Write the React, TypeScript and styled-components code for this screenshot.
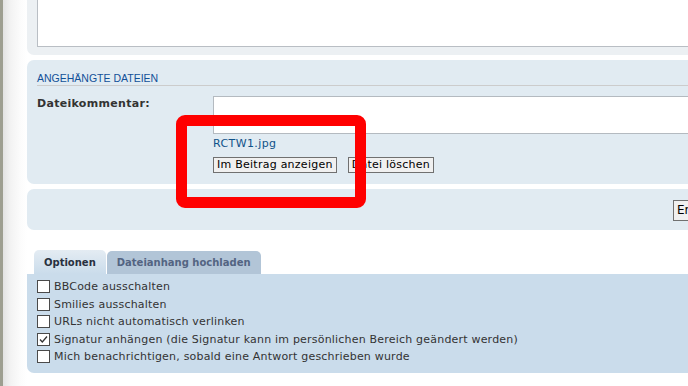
import styled, { createGlobalStyle } from 'styled-components'

const options = [
  { id: 'bbcode', label: 'BBCode ausschalten', checked: false },
  { id: 'smilies', label: 'Smilies ausschalten', checked: false },
  { id: 'urls', label: 'URLs nicht automatisch verlinken', checked: false },
  { id: 'sig', label: 'Signatur anhängen (die Signatur kann im persönlichen Bereich geändert werden)', checked: true },
  { id: 'notify', label: 'Mich benachrichtigen, sobald eine Antwort geschrieben wurde', checked: false },
]

export default function App() {
  return (
    <>
      <GlobalStyle />
      <Page>
        <EdgeStrip />
        <Main>
          <EditorPanel>
            <MessageBox />
          </EditorPanel>

          <Panel>
            <Heading>Angehängte Dateien</Heading>
            <FieldRow>
              <Label>Dateikommentar:</Label>
              <Field>
                <CommentBox />
                <FileLink href="#">RCTW1.jpg</FileLink>
                <ButtonRow>
                  <SmallButton type="button">Im Beitrag anzeigen</SmallButton>
                  <SmallButton type="button">Datei löschen</SmallButton>
                </ButtonRow>
              </Field>
            </FieldRow>
          </Panel>

          <SubmitPanel>
            <BigButton type="button">Erstellen</BigButton>
          </SubmitPanel>

          <TabBar>
            <Tab $active>Optionen</Tab>
            <Tab>Dateianhang hochladen</Tab>
          </TabBar>
          <OptionsPanel>
            {options.map((opt) => (
              <OptionRow key={opt.id}>
                <Box>
                  {opt.checked && (
                    <svg width="11" height="11" viewBox="0 0 11 11">
                      <path d="M2 5.5 L4.3 8 L9 2.5" fill="none" stroke="#333" strokeWidth="1.3" />
                    </svg>
                  )}
                </Box>
                <OptionText>{opt.label}</OptionText>
              </OptionRow>
            ))}
          </OptionsPanel>
        </Main>
        <Highlight />
      </Page>
    </>
  )
}

const GlobalStyle = createGlobalStyle`
  html, body {
    margin: 0;
    padding: 0;
    background: #fff;
  }
  body {
    font-family: "DejaVu Sans", Verdana, sans-serif;
    color: #333;
  }
`

const Page = styled.div`
  position: relative;
  display: flex;
  width: 688px;
  height: 386px;
  overflow: hidden;
  background: #fff;
`

const EdgeStrip = styled.div`
  flex: 0 0 3px;
  background: #9d9e90;
`

const Main = styled.div`
  flex: 0 0 740px;
  padding-left: 24px;
  background: linear-gradient(to right, #e2e2e2 0, #f3f3f3 8px, #fcfcfc 18px, #fff 24px);
`

const EditorPanel = styled.div`
  height: 55px;
  padding: 0 10px;
  box-sizing: border-box;
  background: #ecf0f3;
  border-radius: 0 0 7px 7px;
`

const MessageBox = styled.div`
  height: 47px;
  box-sizing: border-box;
  background: #fff;
  border: 1px solid #b9bec4;
  border-top: none;
`

const Panel = styled.div`
  margin-top: 5px;
  padding: 11px 10px 11px;
  background: #e1ebf2;
  border-radius: 7px 0 0 7px;
`

const Heading = styled.h3`
  margin: 0;
  height: 14px;
  line-height: 14px;
  font-family: "Liberation Sans", Arial, sans-serif;
  font-size: 10.5px;
  font-weight: normal;
  text-transform: uppercase;
  color: #115098;
  border-bottom: 1px solid #cccccc;
`

const FieldRow = styled.div`
  display: flex;
  margin-top: 10px;
`

const Label = styled.div`
  flex: 0 0 176px;
  padding-top: 1px;
  font-size: 11px;
  line-height: 14px;
  letter-spacing: 0.3px;
  font-weight: bold;
  color: #333;
`

const Field = styled.div`
  flex: 1;
  display: flex;
  flex-direction: column;
  align-items: flex-start;
`

const CommentBox = styled.div`
  align-self: stretch;
  height: 38px;
  box-sizing: border-box;
  background: #fff;
  border: 1px solid #b4bac0;
  border-right: none;
`

const FileLink = styled.a`
  margin-top: 3px;
  font-size: 11px;
  line-height: 14px;
  letter-spacing: 0.4px;
  color: #105289;
  text-decoration: none;
`

const ButtonRow = styled.div`
  display: flex;
  gap: 11px;
  margin-top: 6px;
`

const SmallButton = styled.button`
  margin: 0;
  padding: 0 3px;
  height: 16px;
  font-family: "DejaVu Sans", Verdana, sans-serif;
  font-size: 11px;
  line-height: 14px;
  letter-spacing: 0.25px;
  color: #000;
  background: #f0f0f0;
  border: 1px solid #707070;
  border-radius: 0;
`

const SubmitPanel = styled.div`
  margin-top: 5px;
  height: 41px;
  padding: 10px 0 0 646px;
  box-sizing: border-box;
  background: #e1ebf2;
  border-radius: 7px 0 0 7px;
`

const BigButton = styled.button`
  margin: 0;
  padding: 0 3px;
  height: 21px;
  font-family: "DejaVu Sans", Verdana, sans-serif;
  font-size: 12px;
  color: #000;
  background: #f0f0f0;
  border: 1px solid #707070;
  border-radius: 0;
`

const TabBar = styled.div`
  display: flex;
  align-items: flex-end;
  gap: 1px;
  margin-top: 20px;
  padding-left: 7px;
  height: 24px;
`

const Tab = styled.div<{ $active?: boolean }>`
  height: ${({ $active }) => ($active ? '24px' : '23px')};
  padding: 0 10px;
  box-sizing: border-box;
  display: flex;
  align-items: center;
  font-size: 10px;
  font-weight: bold;
  color: ${({ $active }) => ($active ? '#28313f' : '#536482')};
  background: ${({ $active }) =>
    $active ? 'linear-gradient(#e4ecf3, #cadceb)' : '#b2c5d7'};
  border-radius: 5px 5px 0 0;
`

const OptionsPanel = styled.div`
  padding: 4px 10px 7px;
  background: #cadceb;
  border-radius: 0 0 0 7px;
`

const OptionRow = styled.label`
  display: flex;
  align-items: center;
  gap: 4px;
  height: 17.5px;
`

const Box = styled.span`
  display: flex;
  align-items: center;
  justify-content: center;
  width: 13px;
  height: 13px;
  box-sizing: border-box;
  background: #fff;
  border: 1px solid #4a4a4a;
`

const OptionText = styled.span`
  font-size: 11px;
  letter-spacing: 0.2px;
  color: #333;
  white-space: nowrap;
`

const Highlight = styled.div`
  position: absolute;
  left: 176px;
  top: 115px;
  width: 190px;
  height: 93px;
  box-sizing: border-box;
  border: 11px solid #ff0000;
  border-radius: 9px;
  pointer-events: none;
`
